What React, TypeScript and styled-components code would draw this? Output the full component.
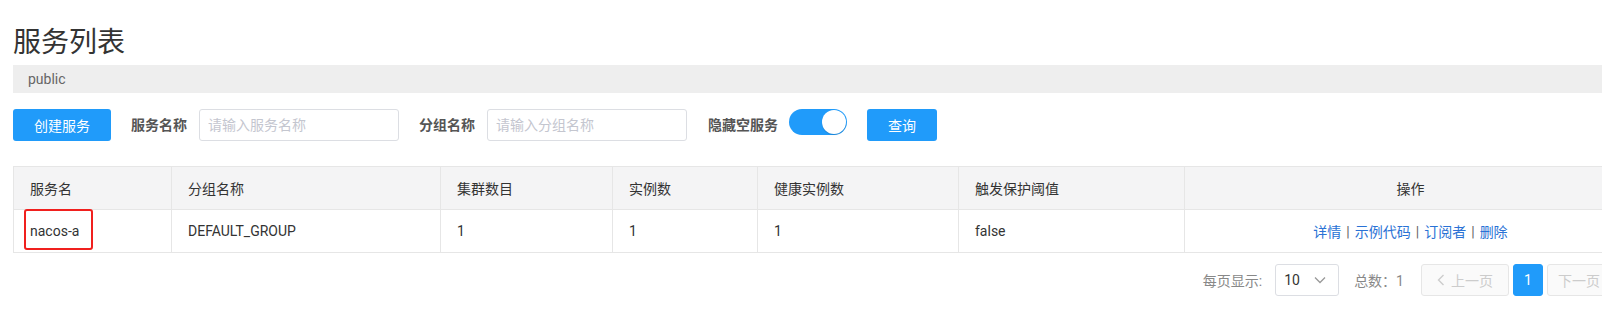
import React from "react";
import styled, { createGlobalStyle } from "styled-components";

const GlobalStyle = createGlobalStyle`
  html, body {
    margin: 0;
    padding: 0;
    background: #fff;
    overflow: hidden;
  }
  body {
    font-family: Roboto, "Noto Sans CJK SC", sans-serif;
    font-size: 14px;
    color: #333;
  }
  * { box-sizing: border-box; }
`;

const Page = styled.div`
  margin-left: 13px;
  width: 1623px;
  padding-top: 25px;
`;

const Title = styled.h1`
  margin: 0;
  font-size: 28px;
  line-height: 36px;
  height: 36px;
  font-weight: 400;
  color: #333;
`;

const NamespaceBar = styled.div`
  margin-top: 4px;
  height: 28px;
  line-height: 28px;
  padding-left: 15px;
  background: #eee;
  color: #666;
  font-size: 14px;
`;

const Toolbar = styled.div`
  display: flex;
  align-items: flex-start;
  margin-top: 16px;
  height: 32px;
`;

const Button = styled.button<{ $w: number }>`
  width: ${(p) => p.$w}px;
  height: 32px;
  border: none;
  border-radius: 3px;
  background: #209bfa;
  color: #fff;
  font-family: inherit;
  font-size: 14px;
  padding: 0;
  cursor: pointer;
`;

const FormItem = styled.div<{ $gap?: number }>`
  display: flex;
  align-items: flex-start;
  margin-left: ${(p) => p.$gap ?? 20}px;
`;

const Label = styled.span<{ $mr?: number }>`
  line-height: 32px;
  font-size: 14px;
  font-weight: 700;
  color: #555;
  margin-right: ${(p) => p.$mr ?? 12}px;
  white-space: nowrap;
`;

const Input = styled.input<{ $w: number }>`
  width: ${(p) => p.$w}px;
  height: 32px;
  border: 1px solid #dcdee3;
  border-radius: 3px;
  padding: 0 8px;
  font-family: inherit;
  font-size: 14px;
  color: #333;
  outline: none;
  &::placeholder {
    color: #c4c6cf;
  }
`;

const SwitchTrack = styled.div`
  width: 58px;
  height: 26px;
  border-radius: 13px;
  background: #209bfa;
  display: flex;
  align-items: center;
  justify-content: flex-end;
  padding: 0 1px;
`;

const SwitchKnob = styled.div`
  width: 24px;
  height: 24px;
  border-radius: 50%;
  background: #fff;
  box-shadow: 0 1px 1px rgba(0, 0, 0, 0.15);
`;

const Table = styled.table`
  margin-top: 25px;
  width: 1623px;
  border-collapse: collapse;
  table-layout: fixed;
`;

const Th = styled.th<{ $center?: boolean }>`
  background: #f4f4f5;
  border: 1px solid #e6e6e6;
  height: 43px;
  padding: 0 16px;
  font-weight: 400;
  font-size: 14px;
  color: #333;
  text-align: ${(p) => (p.$center ? "center" : "left")};
`;

const Td = styled.td<{ $center?: boolean }>`
  border: 1px solid #e6e6e6;
  height: 43px;
  padding: 0 16px;
  font-size: 14px;
  color: #333;
  text-align: ${(p) => (p.$center ? "center" : "left")};
  position: relative;
`;

const Highlight = styled.span`
  position: absolute;
  left: 10px;
  top: -1px;
  width: 69px;
  height: 41px;
  border: 2px solid #f0201e;
  border-radius: 3px;
  pointer-events: none;
`;

const Link = styled.a`
  color: #2a72d5;
  text-decoration: none;
  cursor: pointer;
`;

const Sep = styled.span`
  color: #666;
  margin: 0 5px;
`;

const Pagination = styled.div`
  margin-top: 11px;
  display: flex;
  justify-content: flex-end;
  align-items: center;
  height: 32px;
  padding-right: 1px;
`;

const PagerText = styled.span<{ $mr: number }>`
  color: #888;
  font-size: 14px;
  margin-right: ${(p) => p.$mr}px;
  white-space: nowrap;
`;

const Select = styled.div`
  width: 64px;
  height: 32px;
  border: 1px solid #dcdee3;
  border-radius: 3px;
  display: flex;
  align-items: center;
  justify-content: space-between;
  padding: 0 12px 0 8px;
  margin-right: 15px;
  color: #333;
  font-size: 14px;
`;

const PageButton = styled.button<{ $w: number; $active?: boolean; $pl?: number }>`
  width: ${(p) => p.$w}px;
  height: 32px;
  border-radius: 3px;
  border: 1px solid ${(p) => (p.$active ? "#209bfa" : "#e6e6e6")};
  background: ${(p) => (p.$active ? "#209bfa" : "#fafafa")};
  color: ${(p) => (p.$active ? "#fff" : "#ccc")};
  font-family: inherit;
  font-size: 14px;
  padding: 0 0 0 ${(p) => p.$pl ?? 0}px;
  margin-left: 4px;
  display: flex;
  align-items: center;
  justify-content: ${(p) => (p.$pl ? "flex-start" : "center")};
  gap: 6px;
  white-space: nowrap;
`;

const Chevron = ({ dir }: { dir: "down" | "left" | "right" }) =>
  dir === "down" ? (
    <svg width="12" height="8" viewBox="0 0 12 8">
      <polyline points="1,1.5 6,6.5 11,1.5" fill="none" stroke="#999" strokeWidth="1.3" />
    </svg>
  ) : dir === "left" ? (
    <svg width="8" height="12" viewBox="0 0 8 12">
      <polyline points="6.5,1 1.5,6 6.5,11" fill="none" stroke="#ccc" strokeWidth="1.4" />
    </svg>
  ) : (
    <svg width="8" height="12" viewBox="0 0 8 12">
      <polyline points="1.5,1 6.5,6 1.5,11" fill="none" stroke="#ccc" strokeWidth="1.4" />
    </svg>
  );

const columns = [
  { title: "服务名", width: 158 },
  { title: "分组名称", width: 269 },
  { title: "集群数目", width: 172 },
  { title: "实例数", width: 145 },
  { title: "健康实例数", width: 201 },
  { title: "触发保护阈值", width: 226 },
  { title: "操作", width: 452, center: true },
];

export default function App() {
  return (
    <>
      <GlobalStyle />
      <Page>
        <Title>服务列表</Title>
        <NamespaceBar>public</NamespaceBar>
        <Toolbar>
          <Button $w={98}>创建服务</Button>
          <FormItem>
            <Label>服务名称</Label>
            <Input $w={200} placeholder="请输入服务名称" />
          </FormItem>
          <FormItem>
            <Label>分组名称</Label>
            <Input $w={200} placeholder="请输入分组名称" />
          </FormItem>
          <FormItem $gap={21}>
            <Label $mr={11}>隐藏空服务</Label>
            <SwitchTrack>
              <SwitchKnob />
            </SwitchTrack>
          </FormItem>
          <FormItem>
            <Button $w={70}>查询</Button>
          </FormItem>
        </Toolbar>
        <Table>
          <colgroup>
            {columns.map((c) => (
              <col key={c.title} style={{ width: c.width }} />
            ))}
          </colgroup>
          <thead>
            <tr>
              {columns.map((c) => (
                <Th key={c.title} $center={c.center}>
                  {c.title}
                </Th>
              ))}
            </tr>
          </thead>
          <tbody>
            <tr>
              <Td>
                nacos-a
                <Highlight />
              </Td>
              <Td>DEFAULT_GROUP</Td>
              <Td>1</Td>
              <Td>1</Td>
              <Td>1</Td>
              <Td>false</Td>
              <Td $center>
                <Link>详情</Link>
                <Sep>|</Sep>
                <Link>示例代码</Link>
                <Sep>|</Sep>
                <Link>订阅者</Link>
                <Sep>|</Sep>
                <Link>删除</Link>
              </Td>
            </tr>
          </tbody>
        </Table>
        <Pagination>
          <PagerText $mr={13}>每页显示:</PagerText>
          <Select>
            <span>10</span>
            <Chevron dir="down" />
          </Select>
          <PagerText $mr={13}>总数：1</PagerText>
          <PageButton $w={88} disabled>
            <Chevron dir="left" />
            <span>上一页</span>
          </PageButton>
          <PageButton $w={30} $active>
            1
          </PageButton>
          <PageButton $w={88} $pl={10} disabled>
            <span>下一页</span>
            <Chevron dir="right" />
          </PageButton>
        </Pagination>
      </Page>
    </>
  );
}
